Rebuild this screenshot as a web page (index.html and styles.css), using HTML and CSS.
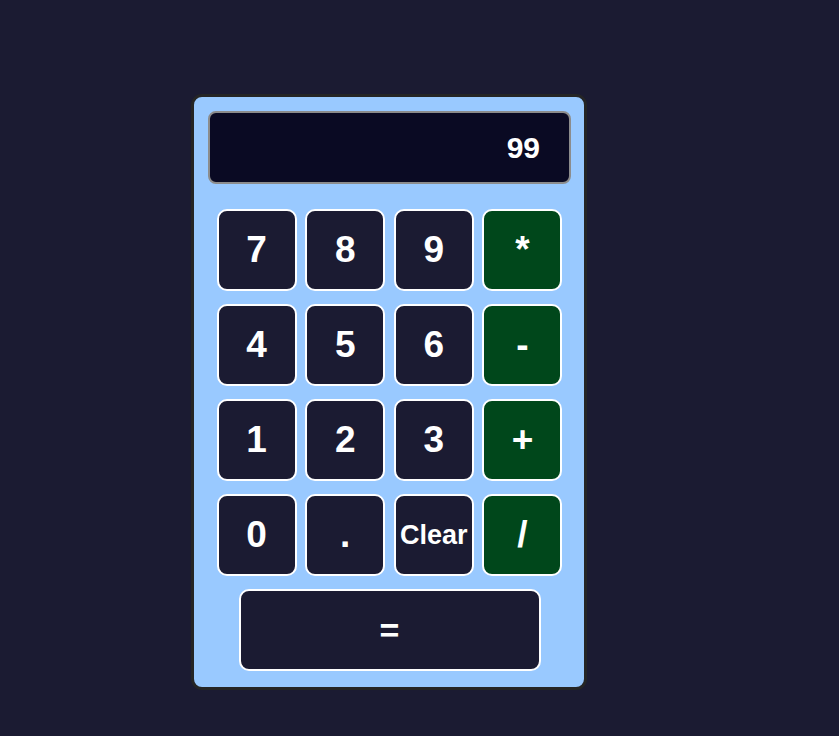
FILE: index.html
```html
<!DOCTYPE html>
<html lang="en">
<head>
<meta charset="utf-8">
<title>Calculator</title>
<link rel="stylesheet" href="styles.css">
</head>
<body>
<div class="calculator">
  <div class="display">99</div>
  <div class="keys">
    <button class="key">7</button>
    <button class="key">8</button>
    <button class="key">9</button>
    <button class="key op">*</button>
    <button class="key">4</button>
    <button class="key">5</button>
    <button class="key">6</button>
    <button class="key op">-</button>
    <button class="key">1</button>
    <button class="key">2</button>
    <button class="key">3</button>
    <button class="key op">+</button>
    <button class="key">0</button>
    <button class="key">.</button>
    <button class="key clear">Clear</button>
    <button class="key op">/</button>
  </div>
  <button class="key equals">=</button>
</div>
</body>
</html>
```
FILE: styles.css
```css
html, body {
  margin: 0;
  background: #1b1b32;
}
body {
  padding: 94px 0 0 191px;
  font-family: "Liberation Sans", Arial, sans-serif;
  min-height: 736px;
  box-sizing: border-box;
}
.calculator {
  box-sizing: border-box;
  width: 396px;
  background: #99c9ff;
  border: 3px solid #252525;
  border-radius: 11px;
  padding: 14px 13px 16px 14px;
  display: flex;
  flex-direction: column;
}
.display {
  box-sizing: border-box;
  height: 73px;
  background: #0a0a23;
  border: 2px solid #8c8c8c;
  border-radius: 8px;
  color: #fff;
  font-weight: bold;
  font-size: 30px;
  display: flex;
  align-items: center;
  justify-content: flex-end;
  padding-right: 29px;
}
.keys {
  margin-top: 25px;
  display: grid;
  grid-template-columns: repeat(4, 80px);
  grid-auto-rows: 82px;
  column-gap: 8.67px;
  row-gap: 13px;
  justify-content: center;
}
.key {
  box-sizing: border-box;
  background: #1b1b32;
  border: 2px solid #fff;
  border-radius: 10px;
  color: #fff;
  font-family: "Liberation Sans", Arial, sans-serif;
  font-weight: bold;
  font-size: 37px;
  padding: 0;
  display: flex;
  align-items: center;
  justify-content: center;
}
.key.op {
  background: #00471b;
}
.key.clear {
  font-size: 27px;
}
.key.equals {
  width: 302px;
  height: 82px;
  margin: 13px auto 0;
  font-size: 34px;
}
```
